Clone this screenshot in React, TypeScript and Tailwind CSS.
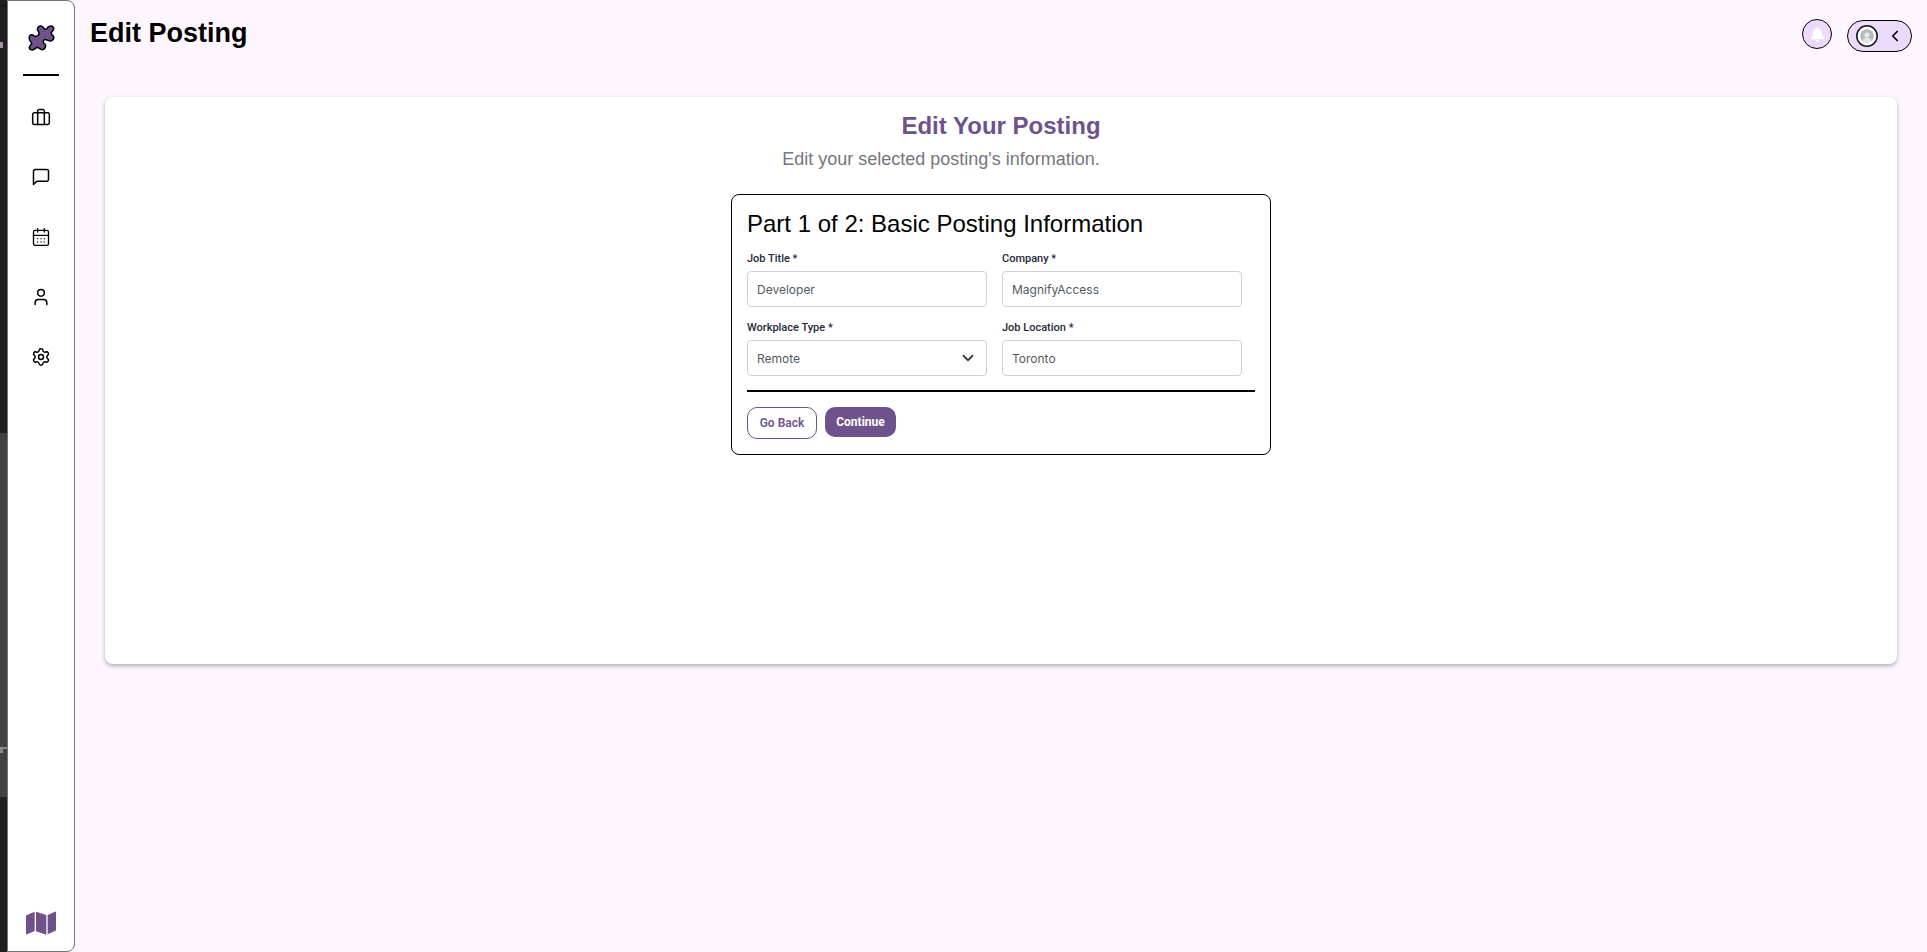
import { useState } from "react";
import { FiBriefcase, FiMessageSquare } from "react-icons/fi";
import { CalendarDays, User, Settings, ChevronDown, ChevronLeft } from "lucide-react";
import { FaBell } from "react-icons/fa";

const labelClass = "font-['Roboto',sans-serif] text-[11px] leading-4 font-medium text-[#1f2937]";
const fieldClass =
  "h-9 w-full rounded border border-[#cbd0e3] bg-white px-[9px] font-['Inter',sans-serif] text-[12px] text-[#555a61] outline-none focus:border-[#6f528c]";

function TextField({ id, label, value }: { id: string; label: string; value: string }) {
  return (
    <div className="flex flex-col gap-1">
      <label htmlFor={id} className={labelClass}>
        {label} *
      </label>
      <input id={id} type="text" defaultValue={value} className={fieldClass} />
    </div>
  );
}

function PuzzleIcon() {
  return (
    <svg viewBox="83 75 80 78" className="h-[26px] w-[27px]" aria-hidden="true">
      <path
        d="M112 84C114 77 124 76 128 82C132 90 138 90 142 82C148 76 156 77 159 83C162 89 156 93 153 97C150 103 156 105 159 109C162 116 156 123 150 123C142 124 138 116 132 119C125 124 129 130 134 133C138 140 132 148 126 149C118 150 115 141 109 142C102 150 93 152 88 147C83 140 90 137 93 132C95 126 86 125 86 114C86 106 92 102 97 105C102 111 108 111 113 106C118 100 116 97 113 93C110 90 110 87 112 84Z"
        fill="#6f528c"
        stroke="#000"
        strokeWidth="4.500"
        strokeLinejoin="round"
      />
    </svg>
  );
}

function MapIcon() {
  return (
    <svg viewBox="0 0 90 72" className="h-6 w-[30px]" fill="#6f528c" aria-hidden="true">
      <path d="M3 12L26 2V60L3 70Q0 71 0 68V15Q0 13 3 12Z" />
      <path d="M30 2L61 12V71L30 61Z" />
      <path d="M65 12L87 2Q90 1 90 4V57Q90 59 87 60L65 70Z" />
    </svg>
  );
}

const navLinks = [
  { label: "Postings", icon: <FiBriefcase className="size-5" strokeWidth={1.8} /> },
  { label: "Messages", icon: <FiMessageSquare className="size-5" strokeWidth={1.8} /> },
  { label: "Calendar", icon: <CalendarDays className="size-5" strokeWidth={1.6} /> },
  { label: "Profile", icon: <User className="size-5" strokeWidth={1.8} /> },
  { label: "Settings", icon: <Settings className="size-5" strokeWidth={1.8} /> },
];

function EdgeStrip() {
  return (
    <div className="flex w-[7px] shrink-0 flex-col bg-[#1f1f1f]">
      <div className="mt-[5px] h-px bg-[#111111]" />
      <div className="mt-9 h-[6px] w-[3px] bg-[#a48fa8]" />
      <div className="mt-[385px] flex h-[364px] flex-col bg-[#424242] pt-[314px]">
        <div className="h-[2px] bg-[#8a8a8a]" />
        <div className="h-1 w-[3px] bg-[#8a8a8a]" />
      </div>
    </div>
  );
}

function Sidebar() {
  return (
    <nav
      aria-label="Main"
      className="flex w-[68px] shrink-0 flex-col items-center rounded-r-lg border border-[#77717d] bg-white"
    >
      <a href="#home" aria-label="Home" className="mt-6 block">
        <PuzzleIcon />
      </a>
      <div className="mt-[23px] h-[2px] w-9 bg-black" />
      <div className="mt-[31px] flex flex-col gap-10">
        {navLinks.map((item) => (
          <a key={item.label} href="#nav" aria-label={item.label} className="block text-black">
            {item.icon}
          </a>
        ))}
      </div>
      <a href="#map" aria-label="Map" className="mt-auto mb-4 block">
        <MapIcon />
      </a>
    </nav>
  );
}

function Header() {
  return (
    <header className="flex items-start justify-between px-[15px] pt-4">
      <h1 className="text-[27px] leading-[34px] font-bold">Edit Posting</h1>
      <div className="flex items-start gap-[15px] pt-[3px]">
        <button
          type="button"
          aria-label="Notifications"
          className="flex size-[30px] items-center justify-center rounded-full border border-black bg-[#ecdafb]"
        >
          <FaBell className="size-[15px] text-white" />
        </button>
        <button
          type="button"
          aria-label="Account"
          className="mt-px flex h-8 w-[65px] items-center justify-between rounded-full border border-black bg-[#ecdafb] pr-[7px] pl-2"
        >
          <svg viewBox="0 0 22 22" className="size-[22px]" aria-hidden="true">
            <circle cx="11" cy="11" r="10.200" fill="#fff" stroke="#111" strokeWidth="1.500" />
            <circle cx="11" cy="11" r="6.800" fill="#b6b9bb" />
            <circle cx="11" cy="10" r="2.600" fill="#e9ebec" />
            <path d="M6.500 16c0-4.500 9-4.500 9 0c-2.500 2-6.500 2-9 0z" fill="#e3e5e6" />
          </svg>
          <ChevronLeft className="size-[18px]" strokeWidth={2.2} />
        </button>
      </div>
    </header>
  );
}

function PostingForm() {
  const [workplace, setWorkplace] = useState("Remote");
  return (
    <form
      onSubmit={(event) => event.preventDefault()}
      className="mt-[23px] w-[540px] max-w-full rounded-lg border border-black px-[15px] pt-[13px] pb-[15px]"
    >
      <h3 className="text-2xl">Part 1 of 2: Basic Posting Information</h3>
      <div className="mt-[11px] mr-[13px] grid grid-cols-2 gap-x-[15px] gap-y-[13px]">
        <TextField id="job-title" label="Job Title" value="Developer" />
        <TextField id="company" label="Company" value="MagnifyAccess" />
        <div className="flex flex-col gap-1">
          <label htmlFor="workplace" className={labelClass}>
            Workplace Type *
          </label>
          <div className="relative">
            <select
              id="workplace"
              value={workplace}
              onChange={(event) => setWorkplace(event.target.value)}
              className={`${fieldClass} appearance-none pt-[2px]`}
            >
              <option>Remote</option>
              <option>Hybrid</option>
              <option>On-site</option>
            </select>
            <ChevronDown
              className="pointer-events-none absolute top-[9px] right-[10px] size-[18px] text-[#3a3f51]"
              strokeWidth={2.5}
            />
          </div>
        </div>
        <TextField id="location" label="Job Location" value="Toronto" />
      </div>
      <hr className="mt-[14px] border-t-2 border-black" />
      <div className="mt-[15px] flex items-start gap-2 font-['Roboto',sans-serif] text-[12px]">
        <button
          type="button"
          className="h-8 w-[70px] rounded-[10px] border border-[#6f528c] bg-white font-semibold text-[#6f528c]"
        >
          Go Back
        </button>
        <button type="submit" className="h-[30px] w-[71px] rounded-[10px] bg-[#6f528c] font-bold text-white">
          Continue
        </button>
      </div>
    </form>
  );
}

export default function App() {
  return (
    <div className="flex min-h-screen bg-[#fdf6ff] font-['Liberation_Sans',Arial,sans-serif] text-black">
      <EdgeStrip />
      <Sidebar />
      <div className="flex min-w-0 flex-1 flex-col">
        <Header />
        <main className="mx-[30px] mt-[45px] flex min-h-[567px] flex-col items-center rounded-lg bg-white pt-[13px] shadow-[0_2px_4px_rgba(0,0,0,0.3)]">
          <h2 className="text-2xl font-bold text-[#6f528c]">Edit Your Posting</h2>
          <p className="mt-[5px] pr-[120px] text-lg leading-6 text-[#77757d]">
            Edit your selected posting's information.
          </p>
          <PostingForm />
        </main>
      </div>
    </div>
  );
}
